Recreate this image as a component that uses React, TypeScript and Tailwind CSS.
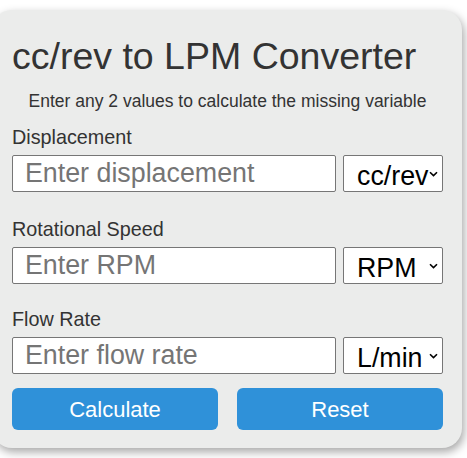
import React, { useState } from "react";

function Chevron() {
  return (
    <svg
      className="pointer-events-none absolute right-[5px] top-1/2 -translate-y-1/2"
      width="9"
      height="6"
      viewBox="0 0 9 6"
      fill="none"
    >
      <path d="M1 1.2 L4.5 4.6 L8 1.2" stroke="#000" strokeWidth="1.6" />
    </svg>
  );
}

interface FieldProps {
  label: string;
  placeholder: string;
  units: string[];
  value: string;
  onChange: (v: string) => void;
}

function Field({ label, placeholder, units, value, onChange }: FieldProps) {
  return (
    <div>
      <label className="block text-[19.8px] leading-[23px] text-[#333]">{label}</label>
      <div className="mt-[6px] flex gap-[7px]">
        <input
          type="number"
          value={value}
          onChange={(e) => onChange(e.target.value)}
          placeholder={placeholder}
          className="h-[37px] w-[324px] rounded-[2px] border border-[#767676] bg-white pl-[12px] text-[26.8px] text-black placeholder:text-[#757575] outline-none"
        />
        <div className="relative w-[100px]">
          <select className="h-[37px] w-full appearance-none rounded-[2px] border border-[#767676] bg-white pl-[13px] pr-[12px] text-[26.8px] text-black outline-none">
            {units.map((u) => (
              <option key={u}>{u}</option>
            ))}
          </select>
          <Chevron />
        </div>
      </div>
    </div>
  );
}

export default function App() {
  const [disp, setDisp] = useState("");
  const [rpm, setRpm] = useState("");
  const [flow, setFlow] = useState("");

  return (
    <div className="min-h-screen bg-white font-['Liberation_Sans',Arial,sans-serif]">
      <div className="-ml-[8px] mt-[10px] w-[470px] rounded-[20px] bg-[#ebeceb] pb-[18px] pl-5 pr-[19px] pt-[25px] shadow-[2px_4px_10px_rgba(0,0,0,0.35)]">
        <h1 className="text-[37.5px] leading-[42px] text-[#333]">cc/rev to LPM Converter</h1>
        <p className="mt-[14px] text-center text-[17.5px] leading-[20px] text-[#333]">
          Enter any 2 values to calculate the missing variable
        </p>

        <div className="mt-[15px]">
          <Field
            label="Displacement"
            placeholder="Enter displacement"
            units={["cc/rev", "in³/rev"]}
            value={disp}
            onChange={setDisp}
          />
        </div>
        <div className="mt-[26px]">
          <Field
            label="Rotational Speed"
            placeholder="Enter RPM"
            units={["RPM"]}
            value={rpm}
            onChange={setRpm}
          />
        </div>
        <div className="mt-[24px]">
          <Field
            label="Flow Rate"
            placeholder="Enter flow rate"
            units={["L/min", "GPM"]}
            value={flow}
            onChange={setFlow}
          />
        </div>

        <div className="mt-[14px] flex justify-between">
          <button className="h-[42px] w-[206px] rounded-[6px] bg-[#2f91d9] text-[22px] text-white">
            Calculate
          </button>
          <button
            onClick={() => {
              setDisp("");
              setRpm("");
              setFlow("");
            }}
            className="h-[42px] w-[206px] rounded-[6px] bg-[#2f91d9] text-[22px] text-white"
          >
            Reset
          </button>
        </div>
      </div>
    </div>
  );
}
